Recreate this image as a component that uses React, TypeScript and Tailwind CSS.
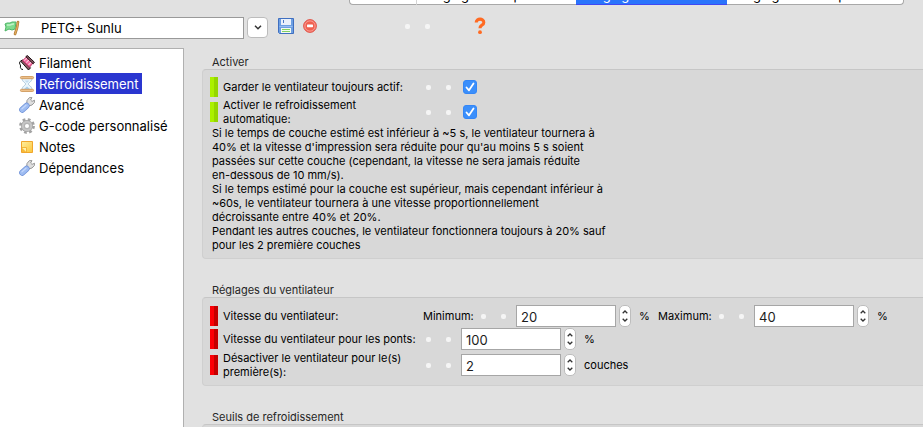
import { useState } from "react";
import type { ReactNode } from "react";

function FlagIcon() {
  return (
    <svg width="16" height="16" viewBox="0 0 16 16" className="shrink-0" aria-hidden="true">
      <path d="M1 4 L3 3 L6 3 L8 2 L12 2 L11 9 L8 10 L5 9 L1 11 L2 7 Z" fill="#7fdc8f" stroke="#4fb568" />
      <path d="M3 5 L6 5 L9 4 L10 4" fill="none" stroke="#c2f3c8" strokeWidth="1.5" />
      <path d="M14 2 L13 8 L11 14" fill="none" stroke="#a8712c" strokeWidth="2.6" strokeLinecap="round" />
      <path d="M14 2 L13 8 L11 14" fill="none" stroke="#e0ab5c" strokeWidth="1.4" strokeLinecap="round" />
    </svg>
  );
}

function SaveIcon() {
  return (
    <svg width="16" height="16" viewBox="0 0 16 16" aria-hidden="true">
      <path d="M0.5 0.5 H15.5 V15.5 H1.5 L0.5 14.5 Z" fill="#6d9fe2" stroke="#3f6fc0" />
      <rect x="3" y="1" width="10" height="6" fill="#eaf1fb" />
      <rect x="5" y="2" width="1" height="3" fill="#4a78c4" />
      <path d="M1.5 8.5 H14.5" stroke="#98bdf0" />
      <rect x="3" y="10" width="10" height="5" fill="#f4fbf0" />
      <path d="M4 11.5 H12 M4 13.5 H12" stroke="#83cf63" />
    </svg>
  );
}

function DeleteIcon() {
  return (
    <svg width="14" height="14" viewBox="0 0 14 14" aria-hidden="true">
      <circle cx="7" cy="7" r="6.4" fill="#f2655a" stroke="#e0584c" />
      <circle cx="7" cy="7" r="5.1" fill="#f0604f" stroke="#f9a198" strokeWidth="0.9" />
      <rect x="4" y="5.6" width="6" height="2.6" rx="0.6" fill="#fff" />
    </svg>
  );
}

function HelpIcon() {
  return (
    <svg width="12" height="18" viewBox="0 0 12 18" aria-hidden="true">
      <path d="M2.2 5.6 C2.2 1 9.8 1 9.8 5.4 C9.8 8.2 6 8 6 11.2" fill="none" stroke="#ff6a22" strokeWidth="3.1" strokeLinecap="butt" />
      <circle cx="6" cy="15.2" r="1.9" fill="#ff6a22" />
    </svg>
  );
}

function SpoolIcon() {
  return (
    <svg width="16" height="16" viewBox="0 0 16 16" aria-hidden="true">
      <path d="M1 6.5 C-0.5 9 2 9.5 1.5 11 C1 13 2 14.5 4 14.5" fill="none" stroke="#111" />
      <path d="M1.5 6 L3.5 5 L11.5 12.8 L9.5 15 Z" fill="#8a5a62" stroke="#1b1114" />
      <path d="M3.6 5.6 L7.6 1.8 L14 8 L10.6 12.2 Z" fill="#f0669c" stroke="#b8265a" strokeWidth="0.8" />
      <path d="M5.2 5.6 L8 3.2 M7.2 7.6 L10.2 4.8 M9.4 9.8 L12.4 7" stroke="#ffc0d8" strokeWidth="1.2" />
      <path d="M6.8 1.6 L8.4 0.6 L15.4 7.2 L14.2 8.8 Z" fill="#8a5a62" stroke="#1b1114" />
    </svg>
  );
}

function HourglassIcon() {
  return (
    <svg width="16" height="16" viewBox="0 0 16 16" aria-hidden="true">
      <path d="M3 2 C3 6 6.6 6.5 6.6 8 C6.6 9.5 3 10 3 14 H13 C13 10 9.4 9.5 9.4 8 C9.4 6.5 13 6 13 2 Z" fill="#eaf5fc" stroke="#a3bfd6" strokeWidth="0.9" />
      <path d="M5.5 4.5 H10.5 L8 7 Z" fill="#c2dcef" />
      <path d="M4.5 13.5 L8 10.5 L11.5 13.5 Z" fill="#a9cdea" />
      <rect x="1.4" y="0.5" width="13.2" height="2.2" rx="1.1" fill="#edc08a" stroke="#cc9252" strokeWidth="0.8" />
      <rect x="1.4" y="13.3" width="13.2" height="2.2" rx="1.1" fill="#edc08a" stroke="#cc9252" strokeWidth="0.8" />
    </svg>
  );
}

function WrenchIcon() {
  return (
    <svg width="16" height="16" viewBox="0 0 16 16" aria-hidden="true">
      <path d="M7.6 8 L8 3.4 L10.4 0.6 L13 0.6 L11.6 3 L13 4.4 L15.5 3.2 L15.4 5.6 L13 8 L9.6 9 Z" fill="#dedede" stroke="#8f8f8f" strokeWidth="0.9" />
      <path d="M3.2 12.8 L7.6 8.8" stroke="#6c8fd6" strokeWidth="6" strokeLinecap="round" />
      <path d="M3.2 12.8 L7.6 8.8" stroke="#9ebcf2" strokeWidth="4.6" strokeLinecap="round" />
      <path d="M3 11.8 L7 8.2" stroke="#c3d7fb" strokeWidth="1.3" strokeLinecap="round" />
    </svg>
  );
}

function GearIcon() {
  return (
    <svg width="16" height="16" viewBox="0 0 16 16" aria-hidden="true">
      <circle cx="8" cy="8" r="6.3" fill="none" stroke="#a2a2a2" strokeWidth="3.2" strokeDasharray="2.6 2.35" />
      <circle cx="8" cy="8" r="6" fill="#a2a2a2" />
      <circle cx="8" cy="8" r="5.3" fill="#c6c6c6" />
      <circle cx="8" cy="8" r="3.2" fill="#b4b4b4" />
      <circle cx="8" cy="8" r="2" fill="#fff" />
    </svg>
  );
}

function NoteIcon() {
  return (
    <svg width="16" height="16" viewBox="0 0 16 16" aria-hidden="true">
      <defs>
        <linearGradient id="note" x1="0" y1="0" x2="1" y2="1">
          <stop offset="0" stopColor="#fff0a0" />
          <stop offset="1" stopColor="#fbc53a" />
        </linearGradient>
      </defs>
      <path d="M2.5 2.5 H13.5 V13.5 H2.5 Z" fill="url(#note)" stroke="#f0a62c" />
      <path d="M3 8.5 H7.5 V13" fill="#fff3b0" stroke="#f3b53c" />
      <path d="M3 9 L7 13 H3 Z" fill="#f7b93a" />
    </svg>
  );
}

/** The pair of small white bullets that precede every option's value. */
function Bullets() {
  return (
    <span className="flex shrink-0">
      {["a", "b"].map((key) => (
        <span key={key} className="flex w-5 justify-center pr-px">
          <span className="size-[5px] rounded-[2px] bg-[#f5f5f5]" />
        </span>
      ))}
    </span>
  );
}

function Marker({ tone }: { tone: "green" | "red" }) {
  return (
    <span
      className={
        tone === "green"
          ? "h-5 w-2 shrink-0 border-r-4 border-[#95d600] bg-[#abf000]"
          : "h-5 w-2 shrink-0 border-r-4 border-[#c40000] bg-[#fb0006]"
      }
    />
  );
}

function Chevron({ up = false }: { up?: boolean }) {
  return (
    <svg width="6" height="4" viewBox="0 0 6 4" aria-hidden="true">
      <path d={up ? "M0.7 3.3 L3 1 L5.3 3.3" : "M0.7 0.7 L3 3 L5.3 0.7"} fill="none" stroke="#333" strokeWidth="1.3" />
    </svg>
  );
}

function SpinBox({ id, initial }: { id: string; initial: number }) {
  const [value, setValue] = useState(initial);
  return (
    <span className="ml-0.5 flex shrink-0 gap-[3px]">
      <input
        id={id}
        value={value}
        onChange={(e) => setValue(Number(e.target.value) || 0)}
        className="h-[22px] w-[100px] border border-[#a6a6a6] bg-white px-1 pt-0.5 text-[13px] text-[#1c1c1c] outline-none"
      />
      <span className="flex h-[22px] w-3 flex-col rounded-[5px] border border-[#bdbdbd] bg-white">
        <button type="button" aria-label="Augmenter" onClick={() => setValue(value + 1)} className="flex flex-1 items-center justify-center pt-0.5">
          <Chevron up />
        </button>
        <button type="button" aria-label="Diminuer" onClick={() => setValue(value - 1)} className="flex flex-1 items-center justify-center pb-0.5">
          <Chevron />
        </button>
      </span>
    </span>
  );
}

function Tick({ id }: { id: string }) {
  return (
    <span className="ml-1 grid size-3.5 shrink-0">
      <input id={id} type="checkbox" defaultChecked className="peer col-start-1 row-start-1 size-3.5 appearance-none rounded-[3px] border border-gray-400 bg-white checked:border-[#3386f7] checked:bg-[#3b8ffb]" />
      <svg viewBox="0 0 14 14" className="pointer-events-none invisible col-start-1 row-start-1 size-3.5 peer-checked:visible" aria-hidden="true">
        <path d="M3.5 7.5 L6 10.3 L10.5 3.5" fill="none" stroke="#fff" strokeWidth="1.8" strokeLinecap="round" strokeLinejoin="round" />
      </svg>
    </span>
  );
}

function Group({ title, children, className }: { title: string; children?: ReactNode; className: string }) {
  return (
    <section>
      <h2 className="pl-2.5 text-[#262626]">{title}</h2>
      <div className={`rounded-l-[4px] border-y border-l border-[#cfcfcf] border-t-[#c6c6c6] bg-[#d8d8d8] pl-[7px] ${className}`}>{children}</div>
    </section>
  );
}

const pages = [
  { name: "Filament", icon: <SpoolIcon /> },
  { name: "Refroidissement", icon: <HourglassIcon /> },
  { name: "Avancé", icon: <WrenchIcon /> },
  { name: "G-code personnalisé", icon: <GearIcon /> },
  { name: "Notes", icon: <NoteIcon /> },
  { name: "Dépendances", icon: <WrenchIcon /> },
];

const tabs = [
  { name: "Plateau", style: "w-[68px] rounded-bl-[4px] border-x border-[#a8a8a8] border-r-[#d5d5d5] bg-white" },
  { name: "Réglages d'impression", style: "w-[159px] border-[#a8a8a8] bg-white" },
  { name: "Réglages du filament", style: "w-[151px] border-[#3f48f2] bg-[#2a74fb] text-white" },
  { name: "Réglages de l'imprimante", style: "w-[177px] rounded-br-[4px] border-r border-[#a8a8a8] bg-white" },
];

export default function App() {
  const [page, setPage] = useState("Refroidissement");

  return (
    <div className="flex h-screen flex-col overflow-hidden bg-[#e1e1e1] font-['Inter','Liberation_Sans',sans-serif] text-[11px] leading-[14px] text-black">
      <nav className="ml-[349px] flex h-[5px] shrink-0 items-end overflow-hidden">
        {tabs.map((tab) => (
          <button key={tab.name} type="button" className={`h-5 shrink-0 border-b text-center text-[13px] leading-[18px] whitespace-nowrap ${tab.style}`}>
            {tab.name}
          </button>
        ))}
      </nav>

      <header className="flex h-[43px] shrink-0 items-start pt-3">
        <div className="flex h-[22px] w-[244px] items-center border border-l-0 border-[#999] bg-white pl-1">
          <FlagIcon />
          <input aria-label="Filament" defaultValue="PETG+ Sunlu" className="ml-[21px] w-40 bg-transparent text-[13px] outline-none" />
        </div>
        <button type="button" aria-label="Choisir un filament" className="ml-[3px] flex h-[21px] w-[21px] items-center justify-center rounded-[4px] border border-[#bcbcbc] bg-white">
          <svg width="8" height="5" viewBox="0 0 8 5" aria-hidden="true">
            <path d="M1 0.8 L4 3.8 L7 0.8" fill="none" stroke="#333" strokeWidth="1.5" />
          </svg>
        </button>
        <div className="flex h-[18px] items-center">
          <button type="button" aria-label="Enregistrer" className="ml-2.5"><SaveIcon /></button>
          <button type="button" aria-label="Supprimer" className="ml-[9px]"><DeleteIcon /></button>
          <span className="ml-[81px]"><Bullets /></span>
          <button type="button" aria-label="Aide" className="ml-9"><HelpIcon /></button>
        </div>
      </header>

      <div className="flex min-h-0 flex-1">
        <nav className="w-[184px] shrink-0 border-t border-r border-[#b0b0b0] bg-white pt-[3px] pl-[19px]">
          {pages.map(({ name, icon }) => (
            <button key={name} type="button" onClick={() => setPage(name)} className="flex h-[21px] items-center gap-px text-[13px] whitespace-nowrap">
              {icon}
              <span className={`flex h-[21px] items-center px-[3px] ${page === name ? "bg-[#2a36d0] text-white" : ""}`}>{name}</span>
            </button>
          ))}
        </nav>

        <main className="ml-[18px] flex min-w-0 flex-1 flex-col gap-6 pt-[7px]">
          <Group title="Activer" className="pt-1.5 pb-1.5">
            <div className="flex h-[22px] items-center">
              <Marker tone="green" />
              <label htmlFor="always" className="ml-[5px] w-[196px] shrink-0">Garder le ventilateur toujours actif:</label>
              <Bullets />
              <Tick id="always" />
            </div>
            <div className="flex items-center">
              <Marker tone="green" />
              <label htmlFor="auto" className="ml-[5px] w-[196px] shrink-0">Activer le refroidissement<br />automatique:</label>
              <Bullets />
              <Tick id="auto" />
            </div>
            <p className="pl-0.5 whitespace-nowrap">
              Si le temps de couche estimé est inférieur à ~5 s, le ventilateur tournera à<br />
              40% et la vitesse d'impression sera réduite pour qu'au moins 5 s soient<br />
              passées sur cette couche (cependant, la vitesse ne sera jamais réduite<br />
              en-dessous de 10 mm/s).<br />
              Si le temps estimé pour la couche est supérieur, mais cependant inférieur à<br />
              ~60s, le ventilateur tournera à une vitesse proportionnellement<br />
              décroissante entre 40% et 20%.<br />
              Pendant les autres couches, le ventilateur fonctionnera toujours à 20% sauf<br />
              pour les 2 première couches
            </p>
          </Group>

          <Group title="Réglages du ventilateur" className="flex flex-col gap-px pt-[7px] pb-1.5">
            <div className="flex items-center">
              <Marker tone="red" />
              <span className="ml-[5px] w-[200px] shrink-0">Vitesse du ventilateur:</span>
              <label htmlFor="min" className="w-[51px] shrink-0 whitespace-nowrap">Minimum:</label>
              <Bullets />
              <SpinBox id="min" initial={20} />
              <span className="ml-2 w-[19px] shrink-0">%</span>
              <label htmlFor="max" className="w-[54px] shrink-0 whitespace-nowrap">Maximum:</label>
              <Bullets />
              <SpinBox id="max" initial={40} />
              <span className="ml-2">%</span>
            </div>
            <div className="flex items-center">
              <Marker tone="red" />
              <label htmlFor="bridge" className="ml-[5px] w-[196px] shrink-0 whitespace-nowrap">Vitesse du ventilateur pour les ponts:</label>
              <Bullets />
              <SpinBox id="bridge" initial={100} />
              <span className="ml-2">%</span>
            </div>
            <div className="flex items-center">
              <Marker tone="red" />
              <label htmlFor="first" className="ml-[5px] w-[196px] shrink-0">Désactiver le ventilateur pour le(s)<br />première(s):</label>
              <Bullets />
              <SpinBox id="first" initial={2} />
              <span className="ml-2">couches</span>
            </div>
          </Group>

          <Group title="Seuils de refroidissement" className="h-10" />
        </main>
      </div>
    </div>
  );
}
